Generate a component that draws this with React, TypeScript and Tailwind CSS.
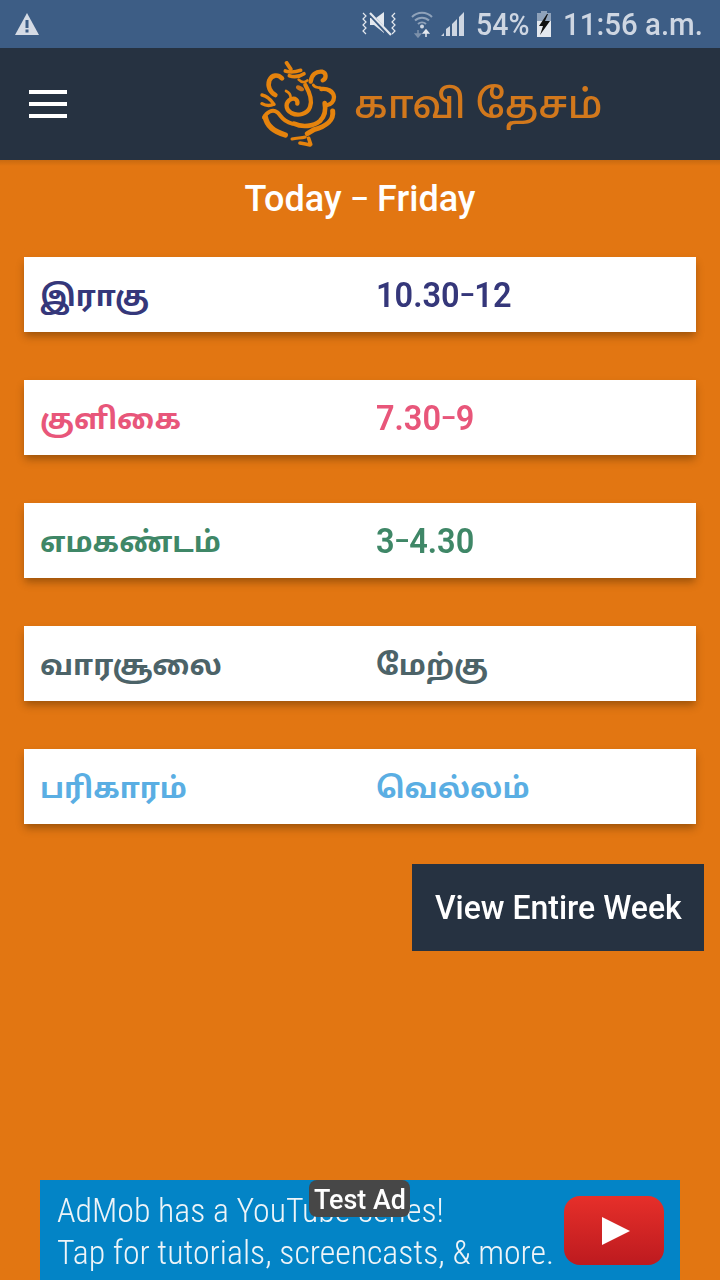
const ROWS = [
  { label: "இராகு", value: ["10.30", "12"], color: "text-[#35377a]" },
  { label: "குளிகை", value: ["7.30", "9"], color: "text-[#e8567a]" },
  { label: "எமகண்டம்", value: ["3", "4.30"], color: "text-[#3f8767]" },
  { label: "வாரசூலை", value: ["மேற்கு"], color: "text-[#4c6368]" },
  { label: "பரிகாரம்", value: ["வெல்லம்"], color: "text-[#5aaee3]" },
];

function StatusIcons() {
  return (
    <div className="flex items-center text-[#ced6e2]">
      {/* vibrate */}
      <svg width="36" height="28" viewBox="0 0 36 28" className="mr-[14px]">
        <path d="M2 3l3 3-3 3 3 3-3 3 3 3-3 3 3 3" fill="none" stroke="#e4e8ee" strokeWidth="1.200" />
        <path d="M34 3l-3 3 3 3-3 3 3 3-3 3 3 3-3 3" fill="none" stroke="#e4e8ee" strokeWidth="1.200" />
        <path d="M9 8h6l8-6v21l-10-8H9z" fill="#e4e8ee" />
        <path d="M8 3l21 23" stroke="#3d5d85" strokeWidth="4" />
        <path d="M9 3l21 22" stroke="#e4e8ee" strokeWidth="2.200" />
      </svg>
      {/* wifi */}
      <svg width="22" height="28" viewBox="0 0 22 28" className="mr-[8px]">
        <path d="M1 7a14 14 0 0 1 20 0M4 10.500a10 10 0 0 1 14 0M7 14a6 6 0 0 1 8 0" fill="none" stroke="#8fa2ba" strokeWidth="2" />
        <circle cx="11" cy="16.500" r="2" fill="#ced6e2" />
        <path d="M7 20v5M4.500 24l2.500 3 2.500-3z" stroke="#7d91ab" fill="#7d91ab" strokeWidth="1.500" />
        <path d="M15 27v-5M12.500 23l2.500-3 2.500 3z" stroke="#e4e8ee" fill="#e4e8ee" strokeWidth="1.500" />
      </svg>
      {/* signal */}
      <svg width="24" height="24" viewBox="0 0 24 24" className="mr-[11px]">
        <path d="M0 24l3-3v3zM5 24v-7l4-3v10zM11 24V12l5-5v17zM18 24V5l5-5v24z" fill="#ced6e2" />
      </svg>
      <span className="mt-[1px] w-[52px] origin-left scale-x-[0.92] whitespace-nowrap text-[31px] leading-none font-medium mr-[8px]">54%</span>
      {/* battery */}
      <svg width="16" height="26" viewBox="0 0 16 26" className="mr-[11px]">
        <path d="M5 0h6v2h4v24H1V2h4z" fill="#e4e8ee" />
        <path d="M5 0h6v2h4v8H1V2h4z" fill="#8fa2ba" />
        <path d="M11 3L3 15h4l-3 9 10-14H9l3-7z" fill="#111" />
      </svg>
      <span className="mt-[1px] w-[140px] origin-left scale-x-[0.95] whitespace-nowrap text-[31px] leading-none font-medium">11:56 a.m.</span>
    </div>
  );
}

function GaneshaLogo() {
  return (
    <svg width="100" height="100" viewBox="0 0 300 300" className="mt-[2px] shrink-0 blur-[0.7px]">
      <g fill="none" stroke="#e5830d" strokeWidth="12" strokeLinecap="round" strokeLinejoin="round">
        <path d="M110 24l12 18" strokeWidth="12" />
        <path d="M106 48c18 6 34 2 46-2M118 62c16 6 32 2 44-6" strokeWidth="11" />
        <path d="M146 74c8 8 18 10 26 2" strokeWidth="8" />
        <path d="M96 70C84 58 66 58 58 76c-6 18 2 36 18 44" strokeWidth="14" />
        <path d="M182 80c2-20 16-32 34-30 14 4 14 20 2 26" strokeWidth="13" />
        <path d="M190 90c4 6 10 8 20 8" strokeWidth="9" />
        <path d="M214 102c18-2 36 6 38 24 0 14-10 22-20 24" strokeWidth="13" />
        <path d="M166 90c14 24 22 46 14 66-8 22-36 28-56 18-20-12-18-34 0-42 12-4 20 4 18 14" strokeWidth="13" />
        <path d="M36 120c10 2 24 10 36 28M36 146c10 6 22 8 36 2" strokeWidth="10" />
        <path d="M108 108c8 4 14 12 14 20" strokeWidth="8" />
        <path d="M42 188c8-18 26-26 40-16 12 10 14 26 44 34" strokeWidth="12" />
        <path d="M46 186c4 24 26 44 60 54" strokeWidth="16" />
        <path d="M132 206c26 12 58 8 78-8 14-14 18-34 14-54" strokeWidth="14" />
        <path d="M248 168c4 26-18 46-56 56l-20 12" strokeWidth="15" />
        <path d="M126 252c14-4 28-2 40-6" strokeWidth="9" />
        <path d="M150 264c12 2 22 4 30 6M176 250l6 18" strokeWidth="11" />
      </g>
      <ellipse cx="150" cy="100" rx="13" ry="7" fill="#c9731a" transform="rotate(25 150 100)" />
    </svg>
  );
}

export default function App() {
  return (
    <div className="flex h-[1280px] w-[720px] flex-col overflow-hidden bg-[#e27612] font-['Roboto','Noto_Sans_Tamil','Noto_Sans',sans-serif]">
      <div className="flex h-[48px] shrink-0 items-center justify-between bg-[#3d5d85] pl-[15px] pr-[17px]">
        <svg width="24" height="22" viewBox="0 0 24 22">
          <path d="M12 0l12 22H0z" fill="#d5dbe5" />
          <path d="M10.500 7h3v8h-3zM10.500 16.500h3v3h-3z" fill="#3d5d85" />
        </svg>
        <StatusIcons />
      </div>

      <header className="relative z-10 flex h-[112px] shrink-0 items-center bg-[#263241] pl-[29px]">
        <div className="flex w-[38px] flex-col gap-[8px]">
          <div className="h-[4px] bg-white" />
          <div className="h-[4px] bg-white" />
          <div className="h-[4px] bg-white" />
        </div>
        <div className="ml-[183px] flex items-center">
          <GaneshaLogo />
          <span className="ml-[4px] mt-[2px] whitespace-nowrap text-[39.500px] leading-none font-medium text-[#d2781c] blur-[0.5px]">
            காவி தேசம்
          </span>
        </div>
      </header>

      <main className="flex flex-1 flex-col bg-gradient-to-b from-[#c96a10] from-0% to-[#e27612] to-[6px]">
        <h1 className="mt-[18px] text-center text-[36px] leading-[42px] font-medium text-white">
          <span className="inline-block">
            Today <span className="align-[3px] text-[28px] font-bold">–</span> Friday
          </span>
        </h1>

        <div className="mt-[37px] flex flex-col gap-[48px] px-[24px]">
          {ROWS.map((row) => (
            <div
              key={row.label}
              className={`flex h-[75px] items-center bg-white pl-[16px] pt-[4px] font-bold shadow-[0_5px_8px_-1px_rgba(70,40,0,0.45)] ${row.color}`}
            >
              <span className="w-[336px] text-[29px]">{row.label}</span>
              {row.value.length === 1 ? (
                <span className="text-[29px]">{row.value[0]}</span>
              ) : (
                <span className="origin-left scale-x-[0.93] text-[35px] font-semibold">
                  {row.value[0]}
                  <span className="align-[3px] text-[25px] font-bold">–</span>
                  {row.value[1]}
                </span>
              )}
            </div>
          ))}
        </div>

        <div className="mt-[40px] flex justify-end pr-[16px]">
          <button className="flex h-[87px] w-[292px] items-center justify-center bg-[#263241] text-[34px] font-medium text-white">
            <span className="inline-block scale-x-[0.94] whitespace-nowrap">View Entire Week</span>
          </button>
        </div>

        <div className="relative mx-[40px] mt-auto flex h-[100px] items-center bg-[#0384c6] pl-[17px]">
          <div className="mt-[4px] origin-left scale-x-[1.025] whitespace-nowrap text-[33px] leading-[42px] font-light text-[#eef4f8] [font-stretch:86%]">
            <div>AdMob has a YouTube series!</div>
            <div>Tap for tutorials, screencasts, &amp; more.</div>
          </div>
          <div className="absolute left-[269px] top-0 flex h-[37px] w-[101px] items-center justify-center rounded-[8px] bg-[#474747] pt-[3px] text-[28px] font-medium text-white">
            <span className="inline-block scale-x-[0.96]">Test Ad</span>
          </div>
          <div className="absolute right-[16px] top-[16px] flex h-[69px] w-[100px] items-center justify-center rounded-[16px] bg-gradient-to-b from-[#e62f2a] to-[#bd1a1f] pl-[4px]">
            <svg width="28" height="28" viewBox="0 0 28 28">
              <path d="M0 0l28 14L0 28z" fill="#fff" />
            </svg>
          </div>
        </div>
      </main>
    </div>
  );
}
